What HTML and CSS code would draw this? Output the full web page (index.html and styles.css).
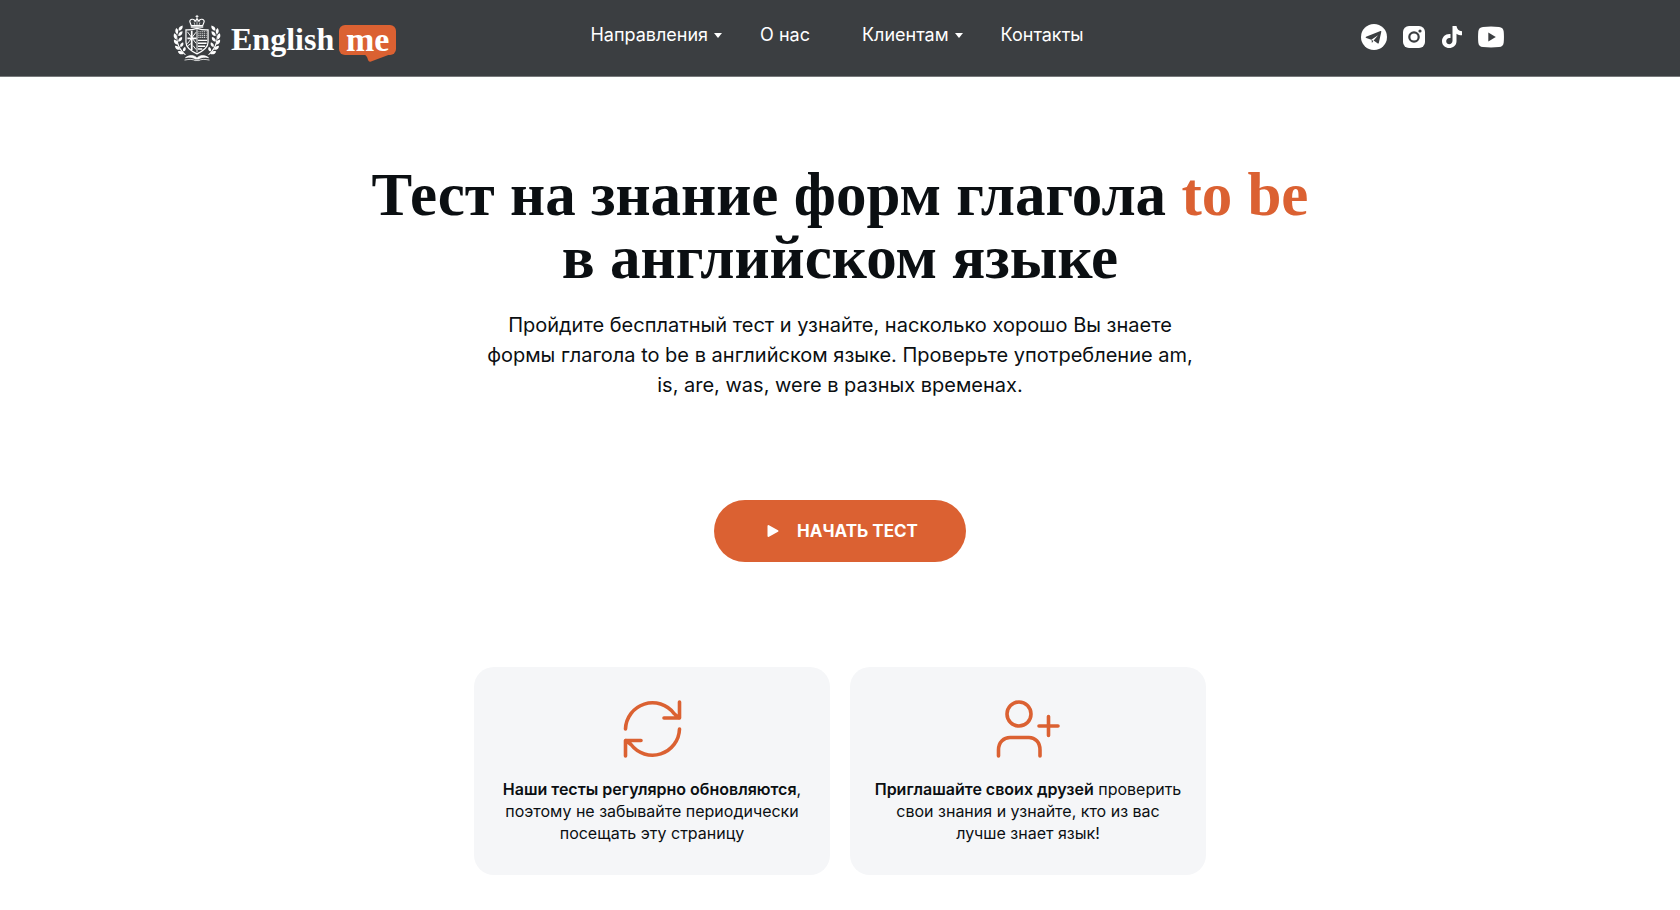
FILE: index.html
```html
<!DOCTYPE html>
<html lang="ru">
<head>
  <meta charset="UTF-8">
  <meta name="viewport" content="width=device-width, initial-scale=1.0">
  <title>Тест на знание форм глагола to be</title>
  <link rel="stylesheet" href="styles.css">
</head>
<body>
  <header class="header">
    <div class="header-inner">
      <a class="logo" href="#">
        <svg class="logo-crest" viewBox="0 0 50 50" fill="none" stroke="#fff" aria-hidden="true">
          <!-- crown -->
          <path d="M25 1v4M23.5 2.5h3" stroke-width="1"/>
          <path d="M19 12l-1.5-4c0-3 4.500-3.500 5.500-.5L25 5l2 2.500c1-3 5.500-2.500 5.500.5L31 12z" stroke-width="1.200"/>
          <path d="M25 6v6M22 9l1 3M28 9l-1 3" stroke-width=".7"/>
          <path d="M18.500 13.500h13" stroke-width="1.500"/>
          <!-- shield -->
          <path d="M13.500 16.500c4 .5 8-.5 11.500-1.500 3.500 1 7.500 2 11.500 1.500v13c0 5.500-5 9-11.500 12-6.500-3-11.500-6.500-11.500-12z" stroke-width="1.300"/>
          <path d="M25 16v24" stroke-width="1"/>
          <path d="M19.500 17.500v20M15 25.500h9.500" stroke-width="1.800"/>
          <path d="M15 18.500l9 12M24 19l-9 12M15.500 33l3-2M21 33l3 4" stroke-width="1"/>
          <path d="M26.500 18.500h8.500M26.500 20.500h8.500M26.500 22.500h8.500M26.500 24.500h8.500" stroke-width="1.100" stroke-dasharray="1 1"/>
          <path d="M26 27.500h9.500M26 30.500h9M26 33.500h7.500M26 36.500h4.500" stroke-width="1.500"/>
          <!-- book -->
          <path d="M13 45.500c4-3 9-3 12 .5 3-3.500 8-3.500 12-.5-4-1-8-.5-10 1.500h-4c-2-2-6-2.500-10-1.500z" fill="#fff" stroke-width=".8"/>
          <path d="M12 48c5-1 9-1 11 .5h4c2-1.500 6-1.500 11-.5" stroke-width=".8"/>
          <!-- laurel branches -->
          <g id="branch" fill="#fff" stroke="none">
            <path d="M10 12c-4 1-4.500 3.500-4 5.500 3-.5 4.500-2.500 4-5.500z"/>
            <path d="M3.500 14.500c-2 3-1 5 .8 6.500 1.700-2 1.700-4.500-.8-6.500z"/>
            <path d="M10 18c-3.500.5-4.500 2.500-4.500 5 3 0 4.500-2 4.500-5z"/>
            <path d="M1.300 20c-1.500 3.500 0 5.500 2.200 6.500 1.200-2.500.8-5-2.200-6.500z"/>
            <path d="M9.500 24c-3 .5-4.500 2.500-4 5 3-.3 4.500-2 4-5z"/>
            <path d="M1 26.500c-.5 3.500 1.500 5 4 5.500.5-2.800-1-5-4-5.500z"/>
            <path d="M10.500 29.500c-3 1-3.500 3-2.800 5 2.800-.5 3.800-2.500 2.800-5z"/>
            <path d="M2 33c.3 3.500 2.500 4.500 5.200 4.300C7 34.500 5 33 2 33z"/>
            <path d="M12.500 34c-2.500 1.500-2.800 3.500-1.500 5 2.500-1 3-3 1.500-5z"/>
            <path d="M5 39c1 3 3.500 3.500 6.300 2.600C10.500 39 8 38 5 39z"/>
            <path d="M4.500 18c-.5 8 0 16 9 24.500l-1 .3C3 35 3 26 4.500 18z"/>
          </g>
          <use href="#branch" transform="translate(50 0) scale(-1 1)"/>
        </svg>
        <span class="logo-name">English</span>
        <span class="logo-bubble">me
          <svg class="logo-tail" viewBox="0 0 28 8" aria-hidden="true"><path d="M0 0h28L8 7.500Q6 8.500 5 6Q4 1 0 0z" fill="#db6132"/></svg>
        </span>
      </a>

      <nav class="menu">
        <a class="menu-link menu-drop" href="#">Направления</a>
        <a class="menu-link" href="#">О нас</a>
        <a class="menu-link menu-drop" href="#">Клиентам</a>
        <a class="menu-link" href="#">Контакты</a>
      </nav>

      <div class="social">
        <a href="#" aria-label="Telegram">
          <svg width="26" height="26" viewBox="0 0 26 26">
            <circle cx="13" cy="13" r="13" fill="#fff"/>
            <path d="M5 12.700L19.500 7q1-.3.800.8l-2.500 11.200q-.2.900-1 .4l-4.200-3 4.500-5.200-6.800 4.600-5-1.700q-1.300-.6-.3-1.400zM10.600 15.800l1.700 1.200-1.400 2z" fill="#3b3e41"/>
          </svg>
        </a>
        <a href="#" aria-label="Instagram">
          <svg width="24" height="24" viewBox="0 0 24 24">
            <rect x="1" y="1" width="22" height="22" rx="6" fill="#fff"/>
            <circle cx="12" cy="12" r="4.700" fill="none" stroke="#3b3e41" stroke-width="2.200"/>
            <circle cx="18" cy="6" r="1.600" fill="#3b3e41"/>
          </svg>
        </a>
        <a href="#" aria-label="TikTok">
          <svg width="22" height="24" viewBox="0 0 22 24">
            <path d="M11.500 1h4c.3 3 2.300 5 5.500 5.300v4c-2.200 0-4-.6-5.500-1.600v7.500c0 9-14.500 9-14.500 0 0-4.500 3.700-7.800 8.500-7.200v4.100c-2.300-.7-4.300.8-4.300 3.100 0 4 6.300 4 6.300-.4z" fill="#fff"/>
          </svg>
        </a>
        <a href="#" aria-label="YouTube">
          <svg width="26" height="22" viewBox="0 0 26 22">
            <path d="M5 .9Q13 .1 21 .9 25.300 1.200 25.700 5.500 26.200 11 25.700 16.500 25.300 20.800 21 21.100 13 21.900 5 21.100.7 20.800.3 16.500-.2 11 .3 5.500.7 1.200 5 .9z" fill="#fff"/>
            <path d="M10.300 6.500l7.500 4.500-7.500 4.500z" fill="#3b3e41"/>
          </svg>
        </a>
      </div>
    </div>
  </header>

  <main class="main">
    <h1 class="title">Тест на знание форм глагола <span class="accent">to be</span><br>в английском языке</h1>
    <p class="lead">Пройдите бесплатный тест и узнайте, насколько хорошо Вы знаете формы глагола to be в английском языке. Проверьте употребление am, is, are, was, were в разных временах.</p>

    <button class="start-btn" type="button">
      <svg width="12" height="14" viewBox="0 0 12 14" aria-hidden="true"><path d="M1.500 2v10l9-5z" fill="#fff" stroke="#fff" stroke-width="2" stroke-linejoin="round"/></svg>
      НАЧАТЬ ТЕСТ
    </button>

    <div class="cards">
      <div class="card">
        <svg class="card-icon" viewBox="0 0 64 60" aria-hidden="true">
          <path d="M5.500 30A27 27 0 0 1 54 14.500L59 19M59.500 3v16H44M59.500 30A27 27 0 0 1 11 45.500L6 41.500M5.500 57V41.500H21"/>
        </svg>
        <p class="card-text"><b>Наши тесты регулярно обновляются</b>, поэтому не забывайте периодически посещать эту страницу</p>
      </div>
      <div class="card">
        <svg class="card-icon" viewBox="0 0 64 60" aria-hidden="true">
          <circle cx="23" cy="15" r="12"/>
          <path d="M2.500 57V51C2.500 43 8 38.500 14 38.500H33C39 38.500 44 43 44 51v6M52.500 17.500v19M43 27h19"/>
        </svg>
        <p class="card-text"><b>Приглашайте своих друзей</b> проверить свои знания и узнайте, кто из вас лучше знает язык!</p>
      </div>
    </div>
  </main>
</body>
</html>
```
FILE: styles.css
```css
* {
  box-sizing: border-box;
}
body {
  margin: 0;
  font-family: Inter, Arial, sans-serif;
  color: #0b0f12;
  background: #fff;
}
a {
  color: inherit;
  text-decoration: none;
}

/* header */
.header {
  background: #3b3e41;
  border-bottom: 1px solid #77797b;
  color: #fff;
}
.header-inner {
  display: grid;
  grid-template-columns: 1fr auto 1fr;
  align-items: center;
  max-width: 1334px;
  height: 76px;
  margin: 0 auto;
}
.logo {
  display: flex;
  align-items: center;
  font-family: "Liberation Serif", serif;
  font-weight: bold;
  font-size: 32px;
  line-height: 30px;
}
.logo-crest {
  width: 48px;
  height: 48px;
  margin-right: 10px;
}
.logo-name {
  padding-top: 2px;
}
.logo-bubble {
  position: relative;
  width: 57px;
  margin-top: 3px;
  margin-left: 5px;
  font-size: 34px;
  text-align: center;
  background: #db6132;
  border-radius: 6px;
}
.logo-tail {
  position: absolute;
  top: 29px;
  left: 24px;
  width: 28px;
  height: 8px;
}
.menu {
  display: flex;
  gap: 38px;
  padding-bottom: 6px;
  padding-left: 8px;
}
.menu-link {
  position: relative;
  padding-right: 14px;
  font-size: 18px;
  line-height: 24px;
}
.menu-drop::after {
  content: "";
  position: absolute;
  top: 10px;
  right: 0;
  border: 4px solid transparent;
  border-top: 5px solid #fff;
  border-bottom: 0;
}
.social {
  display: flex;
  align-items: center;
  justify-content: flex-end;
  gap: 15px;
  padding: 0 3px 3px 0;
}
.social svg {
  display: block;
}

/* main block */
.main {
  display: flex;
  flex-direction: column;
  align-items: center;
  padding: 86px 20px 34px;
  text-align: center;
}
.title {
  margin: 0;
  font-family: "Liberation Serif", serif;
  font-weight: bold;
  font-size: 61px;
  line-height: 63px;
}
.accent {
  color: #db6132;
}
.lead {
  max-width: 720px;
  margin: 21px 0 100px;
  font-size: 20px;
  line-height: 30px;
}
.start-btn {
  display: flex;
  align-items: center;
  justify-content: center;
  gap: 18px;
  width: 252px;
  height: 62px;
  padding: 0 0 0 5px;
  border: none;
  border-radius: 31px;
  background: #db6132;
  color: #fff;
  font-family: inherit;
  font-size: 17px;
  font-weight: 700;
  cursor: pointer;
}
.start-btn:hover {
  background: #c4532a;
}

/* cards */
.cards {
  display: grid;
  grid-template-columns: 1fr 1fr;
  gap: 20px;
  width: 100%;
  max-width: 732px;
  margin-top: 105px;
}
.card {
  padding: 32px 22px 31px;
  border-radius: 20px;
  background: #f5f6f8;
}
.card-icon {
  display: block;
  width: 64px;
  height: 60px;
  margin: 0 auto 19px;
  fill: none;
  stroke: #db6132;
  stroke-width: 3.600;
  stroke-linecap: round;
  stroke-linejoin: round;
}
.card-text {
  margin: 0;
  font-size: 16px;
  line-height: 22px;
}
.card-text b {
  font-weight: 600;
}
```
